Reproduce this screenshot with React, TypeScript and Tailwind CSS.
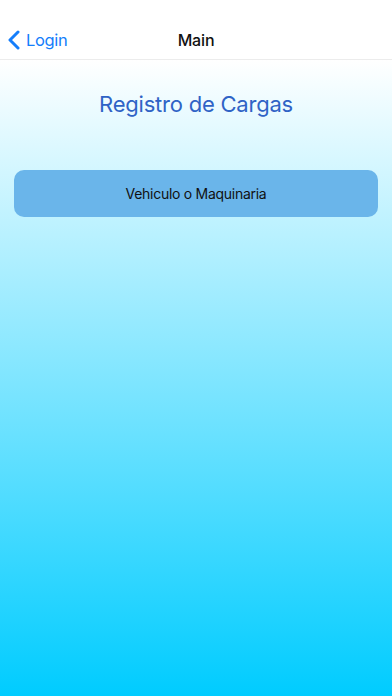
export default function App() {
  return (
    <div
      className="flex h-[696px] w-[392px] flex-col overflow-hidden"
      style={{ fontFamily: "Inter, 'Noto Sans', sans-serif" }}
    >
      <header className="relative flex h-[60px] items-end justify-center border-b border-[#ececec] bg-white pb-[8px]">
        <button className="absolute bottom-[8px] left-[8px] flex items-center gap-[6px] text-[#157efb]">
          <svg width="12" height="20" viewBox="0 0 12 20" fill="none">
            <path d="M10 2 L2 10 L10 18" stroke="#157efb" strokeWidth="3" strokeLinecap="round" strokeLinejoin="round" />
          </svg>
          <span className="text-[16.5px] leading-[22px] tracking-[-0.02em]">Login</span>
        </button>
        <h1 className="text-[16px] font-medium leading-[22px] tracking-[-0.01em] text-[#111]">Main</h1>
      </header>

      <main className="flex flex-1 flex-col bg-[linear-gradient(to_bottom,#ffffff,#00ccff)] px-[14px]">
        <h2 className="mt-[30px] text-center text-[22px] leading-[28px] tracking-[-0.01em] text-[#2f63c6]">
          Registro de Cargas
        </h2>
        <button className="mt-[52px] flex h-[47px] items-center justify-center rounded-[10px] bg-[#6ab5ea] text-[14px] tracking-[-0.02em] text-[#111]">
          Vehiculo o Maquinaria
        </button>
      </main>
    </div>
  );
}
